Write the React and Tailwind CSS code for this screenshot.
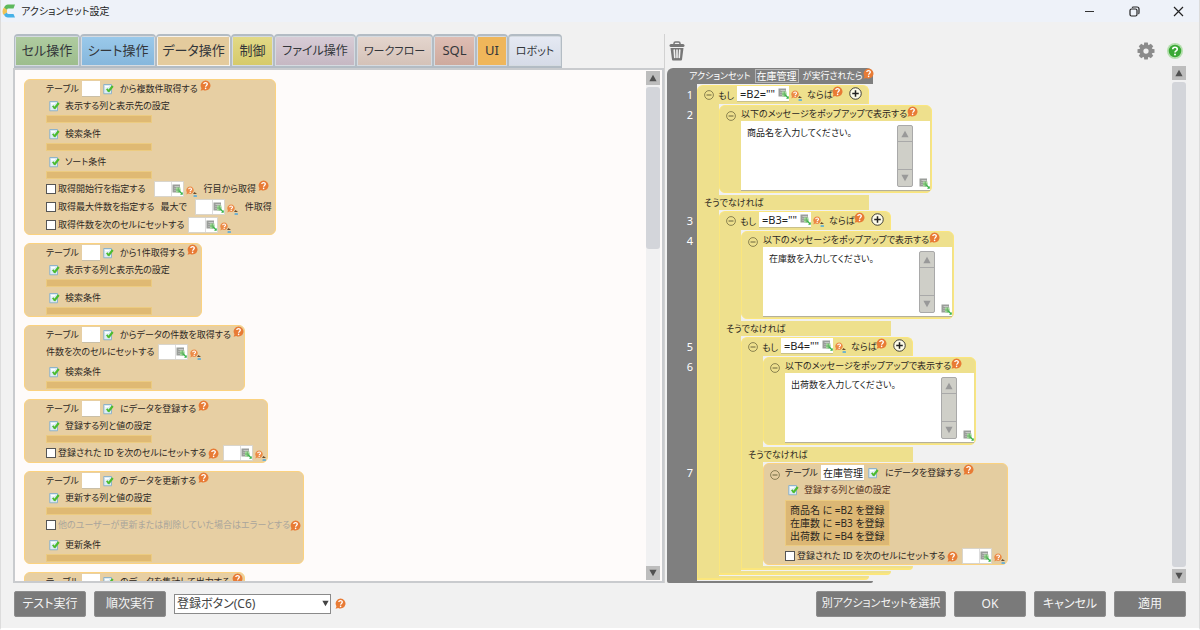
import React from "react";

const cx = (...c) => c.filter(Boolean).join(" ");

/* ---------- icons ---------- */

function HelpIcon({ className = "" }) {
  return (
    <button type="button" aria-label="ヘルプ" className={cx("block size-[11px] shrink-0", className)}>
      <svg viewBox="0 0 22 22" className="block size-full">
        <path d="M11 1a10 10 0 1 1-4.6 18.9L1.200 21.400l1.700-5A10 10 0 0 1 11 1z" fill="#e87b35" />
        <path d="M7.600 8.200C7.600 4.200 14.600 4.200 14.600 8.200c0 2.600-3.400 2.600-3.400 5.400" fill="none" stroke="#fff" strokeWidth="2.600" />
        <circle cx="11.200" cy="16.800" r="1.600" fill="#fff" />
      </svg>
    </button>
  );
}

function CellHelpIcon() {
  return (
    <button type="button" aria-label="セルのヘルプ" className="mt-1 block h-[11px] w-3 shrink-0">
      <svg viewBox="0 0 24 22" className="block size-full">
        <path d="M8 1a7.500 7.500 0 1 1-3.400 14.200L.8 16.800l1-4.200A7.500 7.500 0 0 1 8 1z" fill="#ec8a45" />
        <path d="M5.400 6.600c0-3.400 5.600-3.400 5.600 0 0 2-2.700 2-2.700 4" fill="none" stroke="#fff" strokeWidth="2.200" />
        <circle cx="8.300" cy="13" r="1.300" fill="#fff" />
        <path d="M14 16l3-4 5 4z" fill="#6b4a2a" />
        <rect x="15" y="18.500" width="7" height="3" rx="1" fill="#4aa7e0" />
      </svg>
    </button>
  );
}

function GridIcon({ className = "" }) {
  return (
    <svg viewBox="0 0 22 22" className={cx("block size-[11px] shrink-0", className)} aria-hidden="true">
      <rect x="1" y="1" width="15" height="16" fill="#9a9d9a" />
      <path d="M5 5h10M5 9h2M5 13h2" stroke="#d4d8d4" strokeWidth="1.500" />
      <rect x="8" y="7" width="9" height="10" fill="#a8dca0" />
      <path d="M8 12h9M12.500 7v10" stroke="#5aa857" strokeWidth="1.500" />
      <path d="M14 13.500l6 6" stroke="#38b449" strokeWidth="2.600" />
      <path d="M21.500 16v5.500H16z" fill="#38b449" />
    </svg>
  );
}

function EditIcon() {
  return (
    <button type="button" aria-label="編集" className="block h-3 w-[11px] shrink-0">
      <svg viewBox="0 0 22 24" className="block size-full">
        <path d="M1.500 3h15.500v18.500H1.500z" fill="#dcecf5" stroke="#86aec8" strokeWidth="1.800" />
        <path d="M4 7h8M4 10h5" stroke="#fff" strokeWidth="2" />
        <path d="M7.500 11.500l4 5.500" stroke="#4cbb2e" strokeWidth="3.600" />
        <path d="M10.500 17.500L19.500 6" stroke="#4cbb2e" strokeWidth="4.200" />
      </svg>
    </button>
  );
}

function MinusButton() {
  return (
    <button type="button" aria-label="折りたたむ" className="block size-2.5 shrink-0">
      <svg viewBox="0 0 20 20" className="block size-full">
        <circle cx="10" cy="10" r="8.800" fill="none" stroke="#6b643c" strokeWidth="1.500" />
        <path d="M5 10h10" stroke="#6b643c" strokeWidth="2" />
      </svg>
    </button>
  );
}

function PlusButton() {
  return (
    <button type="button" aria-label="追加" className="block size-[13px] shrink-0">
      <svg viewBox="0 0 26 26" className="block size-full">
        <circle cx="13" cy="13" r="11.500" fill="#fdfbe8" stroke="#2b2b2b" strokeWidth="1.800" />
        <path d="M6.500 13h13M13 6.500v13" stroke="#222" strokeWidth="3" />
      </svg>
    </button>
  );
}

function Triangle({ down = false, className = "" }) {
  return (
    <svg viewBox="0 0 10 10" className={cx("block", className)} aria-hidden="true">
      <path d={down ? "M0.5 1h9L5 9z" : "M0.5 9h9L5 1z"} fill="currentColor" />
    </svg>
  );
}

/* ---------- shared parts ---------- */

function ScrollBar({ thumb }) {
  return (
    <div className="flex w-3.5 shrink-0 flex-col bg-[#f1f1f2]">
      <button type="button" aria-label="上へ" className="grid h-3.5 shrink-0 place-items-center bg-[#bdbdbd] text-[#505050]">
        <Triangle className="size-2" />
      </button>
      <div className="flex min-h-0 flex-1 flex-col py-0.5">
        <div className={cx("rounded-[3px] bg-[#d3d5da]", thumb)} />
      </div>
      <button type="button" aria-label="下へ" className="grid h-3.5 shrink-0 place-items-center bg-[#bdbdbd] text-[#505050]">
        <Triangle down className="size-2" />
      </button>
    </div>
  );
}

function TableInput() {
  return <input aria-label="テーブル" className="h-4 w-[18px] border-b border-[#c9bfa8] bg-white" />;
}

function CellInput({ label }) {
  return (
    <span className="flex items-center">
      <span className="flex h-4 w-[30px] items-center border border-[#d9d5cc] bg-white">
        <input aria-label={label} className="h-full w-[17px] min-w-0 border-r border-[#ddd]" />
        <GridIcon />
      </span>
      <span className="pl-0.5"><CellHelpIcon /></span>
    </span>
  );
}

function Title({ children }) {
  return (
    <div className="flex h-[17px] items-center">
      <span className="w-9">テーブル</span>
      <TableInput />
      <span className="pl-[3px]"><EditIcon /></span>
      <span className="pl-1.5">{children}</span>
      <span className="self-start pl-0.5"><HelpIcon /></span>
    </div>
  );
}

function Setting({ children, className = "" }) {
  return (
    <div className={className}>
      <div className="flex h-[18px] items-center gap-[5px] pl-[3px]">
        <EditIcon />
        <span>{children}</span>
      </div>
      <div className="h-2 w-[106px] border border-[#eccb80] bg-[#dfb973]" />
    </div>
  );
}

function Check({ label, muted = false, children }) {
  return (
    <div className="flex h-[18px] items-center">
      <label className={cx("flex items-center gap-0.5", muted && "text-[#aaa59b]")}>
        <input type="checkbox" className="size-[10px] appearance-none border border-[#555] bg-white checked:bg-[#555]" />
        {label}
      </label>
      {children}
    </div>
  );
}

function Card({ className, children }) {
  return (
    <li className={cx("rounded-md border border-[#fbd280] bg-[#e7cfa3] pl-[21px] whitespace-nowrap", className)}>
      {children}
    </li>
  );
}

/* ---------- left side: palette ---------- */

const TABS = [
  ["セル操作", "w-[66px] text-[13px]", "bg-linear-to-b from-[#afcba0] to-[#9dbd8d]"],
  ["シート操作", "w-[76px] text-[13px]", "bg-linear-to-b from-[#9ac9ea] to-[#86b7dc]"],
  ["データ操作", "w-[75px] text-[13px]", "bg-[#e4cb9d]"],
  ["制御", "w-[43px] text-[13px]", "bg-linear-to-b from-[#e2d986] to-[#d6ca6a]"],
  ["ファイル操作", "w-[82px] text-[12px]", "bg-linear-to-b from-[#d8ccd6] to-[#c6b8c3]"],
  ["ワークフロー", "w-[77px] text-[11px]", "bg-linear-to-b from-[#e4d5cd] to-[#d4c2b8]"],
  ["SQL", "w-[43px] text-[13px]", "bg-linear-to-b from-[#dfbdb3] to-[#ceaa9e]"],
  ["UI", "w-8 text-[13px]", "bg-[#efb65a]"],
  ["ロボット", "w-[54px] text-[11px]", "bg-linear-to-b from-[#e5e9f3] to-[#d6dbe7]"],
];

function Tabs() {
  return (
    <div role="tablist" className="flex h-[34px] shrink-0 pl-px">
      {TABS.map(([name, width, fill], i) => (
        <button
          key={name}
          type="button"
          role="tab"
          aria-selected={i === 2}
          className={cx(
            "flex rounded-t-[4px] border-x border-t-2 border-b-2 border-[#b3bcc4] p-px text-[#33363a]",
            i === 2 ? "bg-[#f7f3ec]" : "bg-[#d5dbe1]",
            width
          )}
        >
          <span className={cx("flex h-full flex-1 items-center justify-center whitespace-nowrap", fill)}>{name}</span>
        </button>
      ))}
    </div>
  );
}

function Palette() {
  return (
    <ul className="flex min-h-0 min-w-0 flex-1 flex-col items-start gap-2 overflow-hidden pt-[9px] pl-[9px]">
      <Card className="w-[252px] shrink-0">
        <Title>から複数件取得する</Title>
        <Setting>表示する列と表示先の設定</Setting>
        <Setting className="mt-0.5">検索条件</Setting>
        <Setting className="mt-0.5">ソート条件</Setting>
        <div className="mt-px">
          <Check label="取得開始行を指定する">
            <span className="pl-2"><CellInput label="開始行" /></span>
            <span className="pl-1.5">行目から取得</span>
            <span className="self-start pl-0.5"><HelpIcon /></span>
          </Check>
          <Check label="取得最大件数を指定する">
            <span className="pl-1.5">最大で</span>
            <span className="pl-2"><CellInput label="最大件数" /></span>
            <span className="pl-1.5">件取得</span>
          </Check>
          <Check label="取得件数を次のセルにセットする">
            <span className="pl-1"><CellInput label="取得件数のセル" /></span>
          </Check>
        </div>
      </Card>
      <Card className="w-[178px] shrink-0 pb-px">
        <Title>から1件取得する</Title>
        <Setting>表示する列と表示先の設定</Setting>
        <Setting className="mt-0.5">検索条件</Setting>
      </Card>
      <Card className="w-[221px] shrink-0 pb-px">
        <Title>からデータの件数を取得する</Title>
        <div className="flex h-[18px] items-center">
          件数を次のセルにセットする
          <span className="pl-1"><CellInput label="件数のセル" /></span>
        </div>
        <Setting className="mt-0.5">検索条件</Setting>
      </Card>
      <Card className="w-[244px] shrink-0">
        <Title>にデータを登録する</Title>
        <Setting>登録する列と値の設定</Setting>
        <div className="mt-px">
          <Check label="登録された ID を次のセルにセットする">
            <HelpIcon className="ml-0.5" />
            <span className="pl-1"><CellInput label="IDのセル" /></span>
          </Check>
        </div>
      </Card>
      <Card className="w-[280px] shrink-0 pb-px">
        <Title>のデータを更新する</Title>
        <Setting>更新する列と値の設定</Setting>
        <div className="mt-px">
          <Check muted label="他のユーザーが更新または削除していた場合はエラーとする">
            <HelpIcon />
          </Check>
        </div>
        <Setting className="mt-0.5">更新条件</Setting>
      </Card>
      <Card className="w-[221px] shrink-0 pb-4">
        <Title>のデータを集計して出力する</Title>
      </Card>
    </ul>
  );
}

/* ---------- right side: program ---------- */

function IfBlock({ expr, message, children }) {
  return (
    <div className="w-max">
      <div className="flex h-[19px] w-[172px] items-start rounded-t-md border border-b-0 border-[#fbe67c] bg-[#eee08d] pl-1.5">
        <div className="flex w-[33px] shrink-0 gap-1 pt-1">
          <MinusButton />
          <span className="leading-3 whitespace-nowrap">もし</span>
        </div>
        <span className="flex h-4 w-[52px] shrink-0 items-center justify-between border-b border-[#c9c08a] bg-white pl-[3px]">
          <input
            aria-label="条件式"
            defaultValue={expr}
            className="h-full w-[37px] min-w-0 font-['Noto_Sans'] text-[11px] text-[#222]"
          />
          <GridIcon />
        </span>
        <span className="pl-0.5"><CellHelpIcon /></span>
        <span className="w-[29px] shrink-0 pt-[3px] pl-1 leading-3 whitespace-nowrap">ならば</span>
        <HelpIcon />
        <span className="pt-px pl-1.5"><PlusButton /></span>
      </div>
      <div className="flex">
        <div className="w-[22px] shrink-0 border-l border-[#fbe67c] bg-[#eee08d]" />
        <div className="pt-px pb-0.5">
          <MessageBlock text={message} />
        </div>
      </div>
      <div className="flex h-[15px] w-[172px] items-center border-l border-[#fbe67c] bg-[#eee08d] pl-1.5">
        そうでなければ
      </div>
      <div className="flex">
        <div className="w-[22px] shrink-0 border-l border-[#fbe67c] bg-[#eee08d]" />
        <div className="py-px">{children}</div>
      </div>
      <div className="h-1 w-[172px] rounded-bl-[4px] rounded-br-full border-b-2 border-l border-[#fbe67c] bg-[#eee08d]" />
    </div>
  );
}

function MessageBlock({ text }) {
  return (
    <div className="h-[88px] w-[213px] rounded-md border border-[#fbe67c] bg-[#eee08d]">
      <div className="flex h-[15px] items-start">
        <div className="w-[21px] shrink-0 pt-[5px] pl-1.5"><MinusButton /></div>
        <span className="pt-0.5 leading-3 whitespace-nowrap">以下のメッセージをポップアップで表示する</span>
        <HelpIcon />
      </div>
      <div className="mr-px ml-[21px] flex h-[70px] border-b border-[#b5b09a] bg-white">
        <textarea
          aria-label="メッセージ"
          defaultValue={text}
          className="h-full min-w-0 flex-1 resize-none overflow-hidden pt-1.5 pl-1.5 text-[9px] leading-3 text-[#222]"
        />
        <div className="mt-1 flex h-[62px] w-4 flex-col divide-y divide-[#a9a9a9] rounded-[2px] border border-[#a9a9a9] bg-[#cfcfc8] text-[#999]">
          <button type="button" aria-label="上へ" className="grid h-4 place-items-center"><Triangle className="size-2" /></button>
          <div className="flex-1" />
          <button type="button" aria-label="下へ" className="grid h-4 place-items-center"><Triangle down className="size-2" /></button>
        </div>
        <div className="flex w-[17px] items-end justify-end pb-px"><GridIcon /></div>
      </div>
    </div>
  );
}

function RegisterBlock() {
  return (
    <div className="h-[102px] w-[245px] rounded-md border border-[#fbd280] bg-[#e4cda0] whitespace-nowrap">
      <div className="flex h-[17px] items-center">
        <div className="w-[21px] shrink-0 pt-1 pl-1.5"><MinusButton /></div>
        <span className="w-9">テーブル</span>
        <input
          aria-label="テーブル"
          defaultValue="在庫管理"
          className="h-4 w-[43px] border-b border-[#c9bfa8] bg-white pl-0.5 text-[10px] text-[#222]"
        />
        <span className="pl-1"><EditIcon /></span>
        <span className="pl-1.5">にデータを登録する</span>
        <span className="self-start pl-0.5"><HelpIcon /></span>
      </div>
      <div className="pl-[21px]">
        <div className="flex h-[18px] items-center gap-[5px] pl-[3px] text-[#55301c]">
          <EditIcon />
          登録する列と値の設定
        </div>
        <div className="my-px flex h-[46px] w-[105px] flex-col justify-center border border-[#eccb80] bg-[#dcb774] pl-1 text-[10px] leading-[13px]">
          <span>商品名 に =B2 を登録</span>
          <span>在庫数 に =B3 を登録</span>
          <span>出荷数 に =B4 を登録</span>
        </div>
        <Check label="登録された ID を次のセルにセットする">
          <HelpIcon className="ml-0.5" />
          <span className="pl-1"><CellInput label="IDのセル" /></span>
        </Check>
      </div>
    </div>
  );
}

function Program() {
  return (
    <div className="min-h-0 min-w-0 flex-1 overflow-hidden">
      <div className="w-max">
        <div className="flex h-4 w-[206px] items-center rounded-t-md bg-[#7f7f7f] pl-[22px] whitespace-nowrap text-white">
          アクションセット
          <span className="mx-1 border border-[#b5b5b5] px-px text-[10px] leading-3">在庫管理</span>
          が実行されたら
          <HelpIcon className="self-start" />
        </div>
        <div className="flex">
          <div className="w-[30px] shrink-0 bg-[#7f7f7f] pt-px pr-1 text-right font-['Noto_Sans'] text-[11px] leading-5 text-white">
            {[[1, 2], [3, 4], [5, 6], [7]].map((group) => (
              <div key={group[0]} className="flex h-[126px] flex-col last:h-auto">
                {group.map((n) => <span key={n}>{n}</span>)}
              </div>
            ))}
          </div>
          <div className="py-px">
            <IfBlock expr={'=B2=""'} message="商品名を入力してください。">
              <IfBlock expr={'=B3=""'} message="在庫数を入力してください。">
                <IfBlock expr={'=B4=""'} message="出荷数を入力してください。">
                  <RegisterBlock />
                </IfBlock>
              </IfBlock>
            </IfBlock>
          </div>
        </div>
        <div className="h-0.5 w-[206px] rounded-b-md bg-[#7f7f7f]" />
      </div>
    </div>
  );
}

/* ---------- window ---------- */

function TitleBar() {
  return (
    <header className="flex h-[22px] shrink-0 items-center bg-[#eef2f9] pl-px text-[10px] text-[#222]">
      <svg viewBox="0 0 28 28" className="mr-[5px] size-3.5" aria-hidden="true">
        <path d="M4 8Q6 1 12 1h14l-3 8H12q-2 0-2 3z" fill="#5cb85c" />
        <path d="M4 7l6 5v5l-6 5q-3-2-3-7 0-5 3-8z" fill="#f0c355" />
        <path d="M4 21l6-4q0 3 3 3h10l3 7H12q-6 0-8-6z" fill="#45b1e8" />
      </svg>
      <h1 className="flex-1">アクションセット設定</h1>
      <div className="flex w-[115px] items-center justify-between pr-[15px]">
        <button type="button" aria-label="最小化" className="w-[11px]">
          <svg viewBox="0 0 11 11" className="w-full"><path d="M1 5.500h9" stroke="#333" /></svg>
        </button>
        <button type="button" aria-label="元に戻す" className="w-[11px]">
          <svg viewBox="0 0 11 11" className="w-full" fill="none" stroke="#222" strokeWidth="1.200">
            <rect x="1" y="3" width="7" height="7" rx="1.500" />
            <path d="M3 1.500Q3.500 1 4.500 1H8q2 0 2 2v3.500q0 1-.5 1.500" />
          </svg>
        </button>
        <button type="button" aria-label="閉じる" className="w-[11px]">
          <svg viewBox="0 0 11 11" className="w-full"><path d="M1 1l9 9M10 1l-9 9" stroke="#222" strokeWidth="1.200" /></svg>
        </button>
      </div>
    </header>
  );
}

function Tools() {
  return (
    <div className="flex h-[34px] shrink-0 items-center pr-4 pl-1">
      <button type="button" aria-label="削除" className="h-5 w-4">
        <svg viewBox="0 0 32 40" className="size-full">
          <path d="M10 7V5q0-3 3-3h6q3 0 3 3v2" fill="none" stroke="#777" strokeWidth="3" />
          <rect x="1" y="6" width="30" height="6" rx="3" fill="#777" />
          <path d="M3 14h26l-3 23q0 2-2 2H8q-2 0-2-2z" fill="#777" />
          <path d="M10.500 18l1 15M16 18v15M21.500 18l-1 15" stroke="#f1f1f1" strokeWidth="3.200" strokeLinecap="round" />
        </svg>
      </button>
      <span className="flex-1" />
      <button type="button" aria-label="設定" className="mr-3 size-[18px]">
        <svg viewBox="-18 -18 36 36" className="size-full">
          {[0, 45, 90, 135, 180, 225, 270, 315].map((a) => (
            <path key={a} d="M-3.500 -17h7l1.500 8h-10z" fill="#8b8b8b" transform={`rotate(${a})`} />
          ))}
          <circle r="9" fill="none" stroke="#8b8b8b" strokeWidth="7.500" />
        </svg>
      </button>
      <button type="button" aria-label="ヘルプ" className="size-4">
        <svg viewBox="0 0 32 32" className="size-full">
          <circle cx="16" cy="16" r="16" fill="#b5dfae" />
          <circle cx="16" cy="16" r="12.500" fill="#3aa835" />
          <path d="M11.500 12.500c0-5.500 9-5.500 9 0 0 3.200-4.500 3-4.500 6.500" fill="none" stroke="#fff" strokeWidth="3.200" />
          <circle cx="16" cy="23" r="2" fill="#fff" />
        </svg>
      </button>
    </div>
  );
}

function FooterButton({ wide = false, children }) {
  return (
    <button
      type="button"
      className={cx(
        "h-[26px] shrink-0 rounded-[2px] border border-[#8d8d8d] bg-[#7a7a7a] whitespace-nowrap text-[#f4f4f4]",
        wide ? "w-[130px] text-[11px]" : "w-[72px] text-[12px]"
      )}
    >
      {children}
    </button>
  );
}

function Footer() {
  return (
    <footer className="flex h-[45px] shrink-0 items-center gap-2 pr-[13px] pb-1 pl-[13px]">
      <FooterButton>テスト実行</FooterButton>
      <FooterButton>順次実行</FooterButton>
      <div className="relative">
        <select
          aria-label="実行するボタン"
          className="block h-5 w-[157px] appearance-none border border-[#8a8a8a] bg-white pl-0.5 text-[12px] text-[#444]"
        >
          <option>登録ボタン(C6)</option>
        </select>
        <Triangle down className="pointer-events-none absolute top-1.5 right-0.5 size-[7px] text-[#444]" />
      </div>
      <HelpIcon className="-ml-1" />
      <span className="flex-1" />
      <FooterButton wide>別アクションセットを選択</FooterButton>
      <FooterButton>OK</FooterButton>
      <FooterButton>キャンセル</FooterButton>
      <FooterButton>適用</FooterButton>
    </footer>
  );
}

export default function App() {
  return (
    <div
      lang="ja"
      className="flex h-screen flex-col border-x border-b-2 border-x-[#dcdcdc] border-b-white bg-[#f1f1f1] font-['Noto_Sans','Noto_Sans_CJK_JP',sans-serif] text-[9px] text-[#2c271f] [font-feature-settings:'palt']"
    >
      <TitleBar />
      <main className="grid min-h-0 flex-1 grid-cols-[651fr_535fr] grid-rows-[minmax(0,1fr)] pt-3 pl-3">
        <section aria-label="操作" className="flex min-h-0 min-w-0 flex-col">
          <Tabs />
          <div className="flex min-h-0 flex-1 border-2 border-[#c9cbce] bg-[#fefbfa]">
            <Palette />
            <div className="flex py-px pr-0.5"><ScrollBar thumb="h-[162px]" /></div>
          </div>
        </section>
        <section aria-label="アクションセット" className="flex min-h-0 min-w-0 flex-col border-l border-[#d2d2d2]">
          <Tools />
          <div className="flex min-h-0 flex-1 pl-0.5">
            <Program />
            <div className="-mt-0.5 flex pr-[13px]"><ScrollBar thumb="flex-1" /></div>
          </div>
        </section>
      </main>
      <Footer />
    </div>
  );
}
